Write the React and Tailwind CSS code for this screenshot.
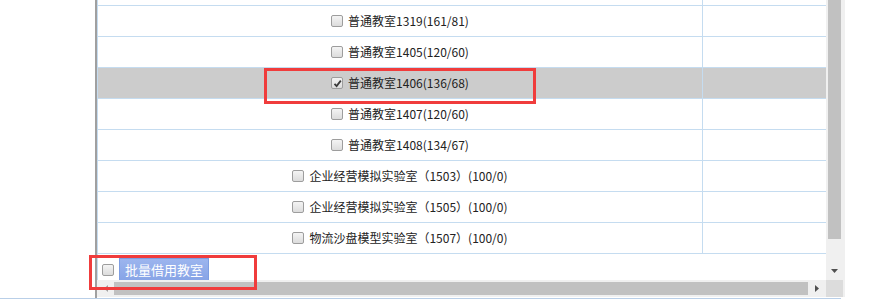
const rooms = [
  { name: '普通教室1319(161/81)' },
  { name: '普通教室1405(120/60)' },
  { name: '普通教室1406(136/68)', checked: true },
  { name: '普通教室1407(120/60)' },
  { name: '普通教室1408(134/67)' },
  { name: '企业经营模拟实验室（1503）(100/0)' },
  { name: '企业经营模拟实验室（1505）(100/0)' },
  { name: '物流沙盘模型实验室（1507）(100/0)' },
];

function Box({ checked }) {
  return (
    <span className="w-[12px] h-[12px] rounded-[2px] border border-[#9d9d9d] bg-gradient-to-b from-[#f4f4f4] to-[#dcdcdc] flex items-center justify-center shrink-0">
      {checked && (
        <svg width="9" height="9" viewBox="0 0 9 9">
          <path d="M1.5 4.8 L3.6 7 L7.8 1.6" fill="none" stroke="#3a3a3a" strokeWidth="1.8" />
        </svg>
      )}
    </span>
  );
}

export default function App() {
  return (
    <div
      className="w-[879px] h-[302px] bg-white relative overflow-hidden text-[12px] text-[#222]"
      style={{ fontFamily: '"Microsoft YaHei", "Noto Sans CJK SC", sans-serif' }}
    >
      <div className="flex h-[298px]">
        <div className="w-[95px]" />
        <div className="w-[750px] border-l-2 border-[#a0a0a0] flex flex-col">
          <div className="flex h-[280px]">
            <div className="w-[729px] border-l border-[#c5dcf0] flex flex-col overflow-hidden">
              <div className="h-[6px] flex shrink-0 border-b border-[#c5dcf0]">
                <div className="w-[605px] border-r border-[#c5dcf0]" />
              </div>
              {rooms.map((r) => (
                <div
                  key={r.name}
                  className={`h-[31px] flex shrink-0 border-b border-[#c5dcf0] ${r.checked ? 'bg-[#cccccc]' : ''}`}
                >
                  <div className="w-[605px] border-r border-[#c5dcf0] flex items-center justify-center gap-[5px]">
                    <Box checked={r.checked} />
                    <span>{r.name}</span>
                  </div>
                  <div className="flex-1" />
                </div>
              ))}
              <div className="flex items-start gap-[5px] pl-[4px] pt-[9px]">
                <span className="mt-[1px]">
                  <Box />
                </span>
                <button className="h-[24px] px-[5px] -mt-[5px] border border-[#7d9de2] bg-gradient-to-b from-[#9cb5ee] to-[#86a3e6] text-white text-[13px] leading-[20px]">
                  批量借用教室
                </button>
              </div>
            </div>
            <div className="w-[19px] bg-[#f0f0f0] pl-[2px] flex flex-col">
              <div className="w-[13px] h-[239px] bg-[#c1c1c1]" />
              <div className="flex-1 flex items-end justify-center pb-[7px] pr-[4px]">
                <svg width="7" height="4" viewBox="0 0 7 4">
                  <path d="M0 0 H7 L3.5 4 Z" fill="#505050" />
                </svg>
              </div>
            </div>
          </div>
          <div className="flex h-[17px] bg-[#f0f0f0]">
            <div className="w-[729px] flex items-center">
              <div className="w-[17px] flex justify-center">
                <svg width="4" height="7" viewBox="0 0 4 7">
                  <path d="M4 0 V7 L0 3.5 Z" fill="#a0a0a0" />
                </svg>
              </div>
              <div className="w-[694px] h-[13px] bg-[#c1c1c1]" />
              <div className="flex-1 flex justify-center">
                <svg width="4" height="7" viewBox="0 0 4 7">
                  <path d="M0 0 V7 L4 3.5 Z" fill="#505050" />
                </svg>
              </div>
            </div>
            <div className="w-[17px] bg-[#dcdcdc]" />
          </div>
        </div>
      </div>
      <div className="w-[841px] h-px bg-[#b9cfe8]" />

      <div className="absolute left-[264px] top-[68px] w-[272px] h-[36px] border-[3px] border-[#f03c3c]" />
      <div className="absolute left-[89px] top-[255px] w-[168px] h-[35px] border-[3px] border-[#f03c3c]" />
    </div>
  );
}
